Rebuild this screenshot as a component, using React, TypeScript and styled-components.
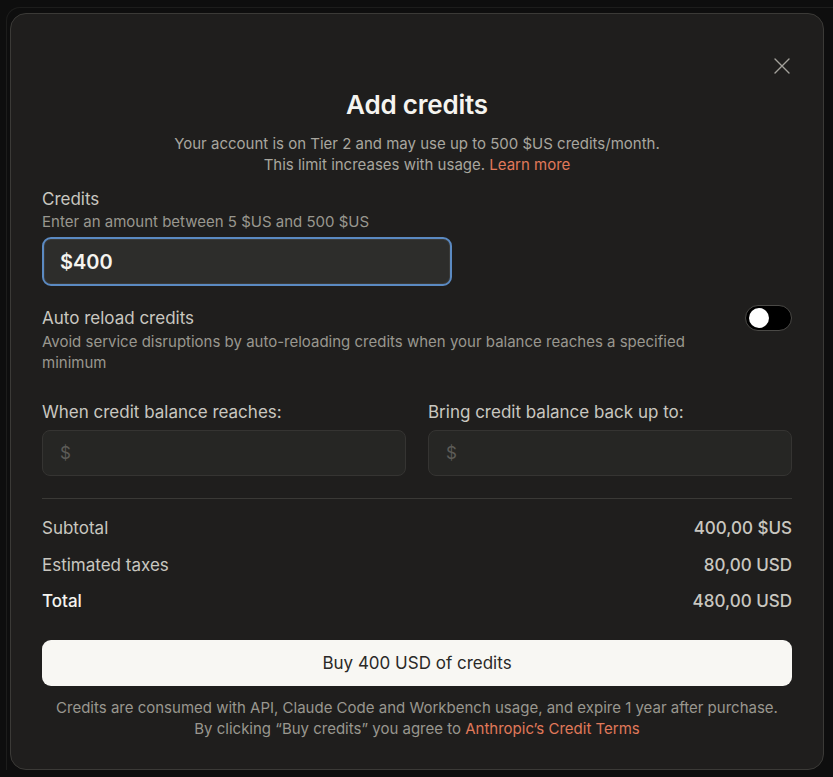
import React, { useState } from 'react';
import styled, { createGlobalStyle } from 'styled-components';

const GlobalStyle = createGlobalStyle`
  html, body {
    margin: 0;
    padding: 0;
    background: #0e0e0e;
  }
  body {
    font-family: Inter, "Noto Sans", "Liberation Sans", sans-serif;
    -webkit-font-smoothing: antialiased;
  }
  * { box-sizing: border-box; }
`;

const Page = styled.div`
  min-height: 100vh;
  padding: 7px 0 0 6px;
  overflow: hidden;
`;

const BackLayer = styled.div`
  border-top: 1px solid #1d1d1c;
  border-left: 1px solid #1d1d1c;
  border-top-left-radius: 14px;
  padding: 5px 0 0 3px;
`;

const Modal = styled.div`
  position: relative;
  width: 814px;
  height: 757px;
  background: #1f1e1d;
  border: 1px solid #3b3a37;
  border-radius: 16px;
  padding: 75px 31px 0;
  display: flex;
  flex-direction: column;
`;

const CloseButton = styled.button`
  position: absolute;
  top: 41px;
  right: 30px;
  width: 22px;
  height: 22px;
  padding: 0;
  border: 0;
  background: transparent;
  color: #a3a19b;
  display: flex;
  align-items: center;
  justify-content: center;
  cursor: pointer;
`;

const Title = styled.h2`
  margin: 0;
  text-align: center;
  font-size: 26px;
  line-height: 32px;
  font-weight: 600;
  color: #f5f4ef;
  letter-spacing: -0.2px;
`;

const Subtitle = styled.p`
  margin: 12px 0 0;
  text-align: center;
  font-size: 15px;
  line-height: 21px;
  color: #a8a69f;
`;

const Link = styled.a`
  color: #e0795a;
  text-decoration: none;
`;

const FieldLabel = styled.div<{ $top?: number }>`
  margin-top: ${({ $top }) => $top ?? 0}px;
  font-size: 17px;
  line-height: 24px;
  color: #c9c7c0;
`;

const Hint = styled.div<{ $top?: number }>`
  margin-top: ${({ $top }) => $top ?? 0}px;
  font-size: 15px;
  line-height: 21px;
  color: #99978f;
`;

const AmountInput = styled.input`
  margin-top: 5px;
  width: 410px;
  height: 49px;
  padding: 0 16px;
  background: #2d2d2b;
  border: 2px solid #5b8ac2;
  border-radius: 9px;
  box-shadow: inset 0 0 0 1px #3a3a38;
  color: #f5f4ef;
  font-family: inherit;
  font-size: 20px;
  font-weight: 600;
  outline: none;
`;

const ReloadRow = styled.div`
  margin-top: 20px;
  display: flex;
  align-items: flex-start;
  justify-content: space-between;
  gap: 30px;
`;

const ReloadText = styled.div`
  flex: 1;
  max-width: 680px;
`;

const Toggle = styled.button<{ $on: boolean }>`
  flex-shrink: 0;
  margin-top: -1px;
  width: 47px;
  height: 26px;
  padding: 0 3px;
  border-radius: 13px;
  border: 1px solid #4a4946;
  background: ${({ $on }) => ($on ? '#d97757' : '#000')};
  display: flex;
  align-items: center;
  justify-content: ${({ $on }) => ($on ? 'flex-end' : 'flex-start')};
  cursor: pointer;
`;

const Knob = styled.span`
  width: 20px;
  height: 20px;
  border-radius: 50%;
  background: #fff;
`;

const Grid = styled.div`
  margin-top: 27px;
  display: grid;
  grid-template-columns: 1fr 1fr;
  column-gap: 22px;
`;

const Field = styled.div`
  display: flex;
  flex-direction: column;
  gap: 6px;
`;

const DollarInput = styled.div`
  height: 46px;
  background: #262624;
  border: 1px solid #353432;
  border-radius: 8px;
  padding: 0 17px;
  display: flex;
  align-items: center;
  font-size: 17px;
  color: #5c5b57;
`;

const Divider = styled.hr`
  margin: 22px 0 0;
  border: 0;
  border-top: 1px solid #3a3936;
`;

const Summary = styled.div`
  margin-top: 17px;
  display: flex;
  flex-direction: column;
  gap: 12.5px;
`;

const SummaryRow = styled.div<{ $strong?: boolean }>`
  display: flex;
  justify-content: space-between;
  font-size: 17px;
  line-height: 24px;
  color: ${({ $strong }) => ($strong ? '#f5f4ef' : '#c9c7c0')};
  font-weight: ${({ $strong }) => ($strong ? 500 : 400)};
`;

const Value = styled.span`
  color: #c9c7c0;
  font-weight: 500;
`;

const BuyButton = styled.button`
  margin-top: 27px;
  height: 46px;
  width: 100%;
  border: 0;
  border-radius: 9px;
  background: #f8f7f3;
  color: #2a2927;
  font-family: inherit;
  font-size: 17px;
  cursor: pointer;
`;

const Footer = styled.p`
  margin: 11px 0 0;
  text-align: center;
  font-size: 15px;
  line-height: 21px;
  color: #99978f;
`;

export default function App() {
  const [autoReload, setAutoReload] = useState(false);

  return (
    <Page>
      <GlobalStyle />
      <BackLayer>
        <Modal>
          <CloseButton aria-label="Close">
            <svg width="18" height="18" viewBox="0 0 18 18" fill="none" stroke="currentColor" strokeWidth="1.4" strokeLinecap="round">
              <path d="M2 2 L16 16 M16 2 L2 16" />
            </svg>
          </CloseButton>

          <Title>Add credits</Title>
          <Subtitle>
            Your account is on Tier 2 and may use up to 500 $US credits/month.
            <br />
            This limit increases with usage. <Link href="#">Learn more</Link>
          </Subtitle>

          <FieldLabel $top={12}>Credits</FieldLabel>
          <Hint>Enter an amount between 5 $US and 500 $US</Hint>
          <AmountInput defaultValue="$400" />

          <ReloadRow>
            <ReloadText>
              <FieldLabel>Auto reload credits</FieldLabel>
              <Hint $top={1}>
                Avoid service disruptions by auto-reloading credits when your balance reaches a specified minimum
              </Hint>
            </ReloadText>
            <Toggle $on={autoReload} onClick={() => setAutoReload(!autoReload)} aria-label="Auto reload">
              <Knob />
            </Toggle>
          </ReloadRow>

          <Grid>
            <Field>
              <FieldLabel>When credit balance reaches:</FieldLabel>
              <DollarInput>$</DollarInput>
            </Field>
            <Field>
              <FieldLabel>Bring credit balance back up to:</FieldLabel>
              <DollarInput>$</DollarInput>
            </Field>
          </Grid>

          <Divider />

          <Summary>
            <SummaryRow>
              <span>Subtotal</span>
              <Value>400,00 $US</Value>
            </SummaryRow>
            <SummaryRow>
              <span>Estimated taxes</span>
              <Value>80,00 USD</Value>
            </SummaryRow>
            <SummaryRow $strong>
              <span>Total</span>
              <Value>480,00 USD</Value>
            </SummaryRow>
          </Summary>

          <BuyButton>Buy 400 USD of credits</BuyButton>

          <Footer>
            Credits are consumed with API, Claude Code and Workbench usage, and expire 1 year after purchase.
            <br />
            By clicking “Buy credits” you agree to <Link href="#">Anthropic’s Credit Terms</Link>
          </Footer>
        </Modal>
      </BackLayer>
    </Page>
  );
}
